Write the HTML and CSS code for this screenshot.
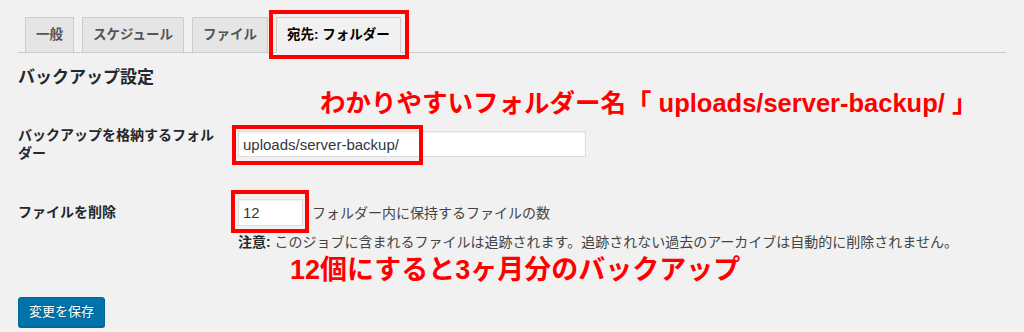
FILE: index.html
```html
<!DOCTYPE html>
<html lang="ja">
<head>
<meta charset="utf-8">
<title>宛先: フォルダー</title>
<link rel="stylesheet" href="styles.css">
</head>
<body>
<div class="wrap">
  <nav class="tabs">
    <a class="tab">一般</a>
    <a class="tab">スケジュール</a>
    <a class="tab">ファイル</a>
    <a class="tab active">宛先: フォルダー</a>
  </nav>
  <h2 class="title">バックアップ設定</h2>
  <div class="row row1">
    <div class="label">バックアップを格納するフォルダー</div>
    <div class="field">
      <span class="hl"><input class="text wide" type="text" value="uploads/server-backup/"><span class="mark mark1"></span></span>
    </div>
  </div>
  <div class="row row2">
    <div class="label">ファイルを削除</div>
    <div class="field">
      <div class="line">
        <span class="hl"><input class="text small" type="text" value="12"><span class="mark mark2"></span></span>
        <span class="desc">フォルダー内に保持するファイルの数</span>
      </div>
      <p class="note"><strong>注意:</strong> このジョブに含まれるファイルは追跡されます。追跡されない過去のアーカイブは自動的に削除されません。</p>
    </div>
  </div>
  <button class="primary" type="button">変更を保存</button>
  <div class="annot a1">わかりやすいフォルダー名「 uploads/server-backup/ 」</div>
  <div class="annot a2">12個にすると3ヶ月分のバックアップ</div>
</div>
</body>
</html>
```

FILE: styles.css
```css
html, body {
  margin: 0;
  background: #f1f1f1;
}
body {
  font-family: "Liberation Sans", "Noto Sans CJK JP", sans-serif;
  font-size: 14px;
  color: #444;
}
.wrap {
  position: relative;
  box-sizing: border-box;
  height: 332px;
  padding: 17px 18px 0;
  overflow: hidden;
}
.tabs {
  display: flex;
  gap: 8px;
  padding-left: 7px;
  border-bottom: 1px solid #ccc;
}
.tab {
  border: 1px solid #ccc;
  background: #e5e5e5;
  padding: 5px 10px;
  font-size: 13.5px;
  line-height: 24px;
  font-weight: 700;
  color: #555;
  margin-bottom: -1px;
  white-space: nowrap;
}
.tab.active {
  position: relative;
  background: #f1f1f1;
  color: #000;
  border-bottom-color: #f1f1f1;
}
.tab.active::after {
  content: "";
  position: absolute;
  left: -8px;
  right: -9px;
  top: -8px;
  bottom: -7px;
  border: 4px solid #f00;
}
.title {
  margin: 14px 0 0;
  font-size: 17px;
  line-height: 22px;
  font-weight: 700;
  color: #23282d;
}
.row {
  display: grid;
  grid-template-columns: 200px 1fr;
  column-gap: 20px;
  align-items: start;
}
.row1 { margin-top: 37px; }
.row2 { margin-top: 37px; }
.label {
  color: #23282d;
  font-weight: 700;
  line-height: 18px;
}
.row1 .field { padding-top: 5px; }
.row2 .label { padding-top: 4px; }
.hl {
  position: relative;
  display: inline-block;
  vertical-align: top;
}
.text {
  display: block;
  box-sizing: border-box;
  height: 27px;
  margin: 0;
  padding: 0 4px;
  border: 1px solid #ddd;
  box-shadow: inset 0 1px 2px rgba(0, 0, 0, .07);
  background: #fff;
  font: 15px "Liberation Sans", "Noto Sans CJK JP", sans-serif;
  color: #32373c;
}
.wide { width: 348px; height: 26px; }
.small { width: 65px; }
.mark {
  position: absolute;
  box-sizing: border-box;
  border: 4px solid #f00;
}
.mark1 { left: -6px; top: -6px; width: 191px; height: 40px; }
.mark2 { left: -7px; top: -9px; width: 78px; height: 43px; }
.line {
  display: flex;
  align-items: center;
}
.desc {
  margin-left: 9px;
  line-height: 18px;
}
.note {
  margin: 7px 0 0;
  line-height: 18px;
  white-space: nowrap;
}
.note strong { color: #23282d; }
.primary {
  display: block;
  margin-top: 46px;
  height: 30px;
  padding: 0 10px;
  border: 1px solid #006799;
  border-radius: 3px;
  background: #0073aa;
  box-shadow: 0 1px 0 #006799;
  color: #fff;
  font: 13px/28px "Liberation Sans", "Noto Sans CJK JP", sans-serif;
  text-shadow: 0 -1px 1px #006799, 1px 0 1px #006799, 0 1px 1px #006799, -1px 0 1px #006799;
}
.annot {
  position: absolute;
  color: #f00;
  font-weight: 700;
  white-space: nowrap;
}
.a1 {
  left: 320px;
  top: 88px;
  font-size: 25.5px;
  line-height: 30px;
}
.a2 {
  left: 290px;
  top: 255px;
  font-size: 27px;
  line-height: 30px;
}
```
